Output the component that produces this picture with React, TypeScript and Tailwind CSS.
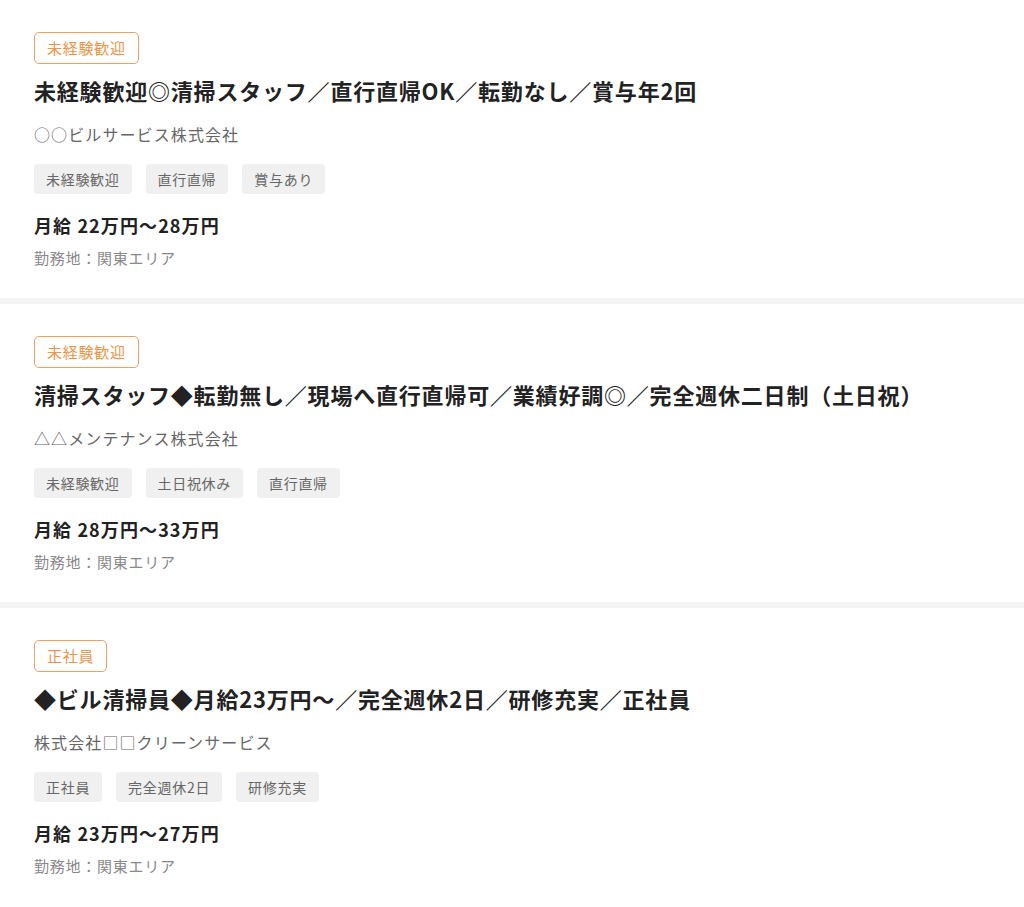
const jobs = [
  {
    badge: '未経験歓迎',
    title: '未経験歓迎◎清掃スタッフ／直行直帰OK／転勤なし／賞与年2回',
    company: '○○ビルサービス株式会社',
    tags: ['未経験歓迎', '直行直帰', '賞与あり'],
    salary: '月給 22万円〜28万円',
    location: '勤務地：関東エリア',
  },
  {
    badge: '未経験歓迎',
    title: '清掃スタッフ◆転勤無し／現場へ直行直帰可／業績好調◎／完全週休二日制（土日祝）',
    company: '△△メンテナンス株式会社',
    tags: ['未経験歓迎', '土日祝休み', '直行直帰'],
    salary: '月給 28万円〜33万円',
    location: '勤務地：関東エリア',
  },
  {
    badge: '正社員',
    title: '◆ビル清掃員◆月給23万円〜／完全週休2日／研修充実／正社員',
    company: '株式会社□□クリーンサービス',
    tags: ['正社員', '完全週休2日', '研修充実'],
    salary: '月給 23万円〜27万円',
    location: '勤務地：関東エリア',
  },
];

export default function App() {
  return (
    <div className="min-h-screen bg-white font-['Noto_Sans_CJK_JP',sans-serif]">
      {jobs.map((job, i) => (
        <div key={i} className={i > 0 ? 'border-t-[6px] border-[#f4f4f4]' : ''}>
          <div className="px-[34px] pt-[32px] pb-[30px]">
            <span className="inline-flex h-[32px] items-center rounded-[5px] border-[1.5px] border-[#f0a060] px-[12px] text-[15px] tracking-wider text-[#ee9448]">
              {job.badge}
            </span>
            <h2 className="mt-[10px] text-[22px] font-bold leading-[33px] tracking-[0.8px] text-[#222]">
              {job.title}
            </h2>
            <p className="mt-[15px] text-[16px] leading-[24px] tracking-[1.1px] text-[#666]">{job.company}</p>
            <div className="mt-[18px] flex gap-[14px]">
              {job.tags.map((t) => (
                <span
                  key={t}
                  className="inline-flex h-[30px] items-center rounded-[4px] bg-[#f0f0f0] px-[12px] text-[14px] tracking-wider text-[#666]"
                >
                  {t}
                </span>
              ))}
            </div>
            <p className="mt-[18px] text-[18px] font-bold leading-[27px] tracking-[1.1px] text-[#222]">{job.salary}</p>
            <p className="mt-[8px] text-[15px] leading-[21px] tracking-wider text-[#888]">{job.location}</p>
          </div>
        </div>
      ))}
    </div>
  );
}
